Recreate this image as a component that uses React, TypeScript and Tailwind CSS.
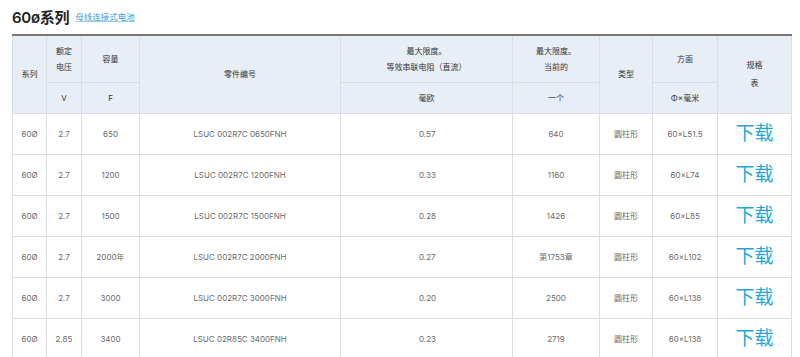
import React from "react";

const rows = [
  ["60Ø", "2.7", "650", "LSUC 002R7C 0650FNH", "0.57", "640", "圆柱形", "60×L51.5"],
  ["60Ø", "2.7", "1200", "LSUC 002R7C 1200FNH", "0.33", "1160", "圆柱形", "60×L74"],
  ["60Ø", "2.7", "1500", "LSUC 002R7C 1500FNH", "0.28", "1426", "圆柱形", "60×L85"],
  ["60Ø", "2.7", "2000年", "LSUC 002R7C 2000FNH", "0.27", "第1753章", "圆柱形", "60×L102"],
  ["60Ø", "2.7", "3000", "LSUC 002R7C 3000FNH", "0.20", "2500", "圆柱形", "60×L138"],
  ["60Ø", "2.85", "3400", "LSUC 02R85C 3400FNH", "0.23", "2719", "圆柱形", "60×L138"],
];

const widths = [34, 35, 58, 201, 172, 87, 53, 65, 74];

export default function App() {
  const th = "border border-[#d9dde2] bg-[#e7eef5] text-[8px] text-[#333] font-normal text-center align-middle leading-[16px]";
  const td = "border border-[#dddddd] text-[8px] text-[#6a6a6a] text-center align-middle h-[41px]";
  return (
    <div
      className="w-[800px] h-[357px] overflow-hidden bg-white"
      style={{ fontFamily: "Inter, 'Noto Sans CJK SC', sans-serif" }}
    >
      <div className="flex items-center h-[34px] pl-[12px]">
        <span className="text-[15px] font-semibold text-[#222] leading-none tracking-[-0.3px]">60ø系列</span>
        <span className="ml-[6px] text-[8.5px] text-[#3d9ad6] underline decoration-[#9cc8ea] leading-none">
          母线连接式电池
        </span>
      </div>
      <table className="ml-[12px] border-collapse table-fixed w-[779px] border-t-2 border-t-[#777]">
        <colgroup>
          {widths.map((w, i) => (
            <col key={i} style={{ width: w }} />
          ))}
        </colgroup>
        <thead>
          <tr className="h-[47px]">
            <th rowSpan={2} className={th + " border-t-2 border-t-[#777]"}>系列</th>
            <th className={th + " border-t-2 border-t-[#777]"}>额定<br />电压</th>
            <th className={th + " border-t-2 border-t-[#777]"}>容量</th>
            <th rowSpan={2} className={th + " border-t-2 border-t-[#777]"}>零件编号</th>
            <th className={th + " border-t-2 border-t-[#777]"}>最大限度。<br />等效串联电阻（直流）</th>
            <th className={th + " border-t-2 border-t-[#777]"}>最大限度。<br />当前的</th>
            <th rowSpan={2} className={th + " border-t-2 border-t-[#777]"}>类型</th>
            <th className={th + " border-t-2 border-t-[#777]"}>方面</th>
            <th rowSpan={2} className={th + " border-t-2 border-t-[#777] leading-[18px]"}>规格<br />表</th>
          </tr>
          <tr className="h-[31px]">
            <th className={th}>V</th>
            <th className={th}>F</th>
            <th className={th}>毫欧</th>
            <th className={th}>一个</th>
            <th className={th}>Φ×毫米</th>
          </tr>
        </thead>
        <tbody>
          {rows.map((r, i) => (
            <tr key={i}>
              {r.map((c, j) => (
                <td key={j} className={td + (j === 4 ? " text-left pl-[78px]" : "")}>{c}</td>
              ))}
              <td className={td}>
                <span className="text-[19px] text-[#1ea7d8] leading-none">下载</span>
              </td>
            </tr>
          ))}
        </tbody>
      </table>
    </div>
  );
}
